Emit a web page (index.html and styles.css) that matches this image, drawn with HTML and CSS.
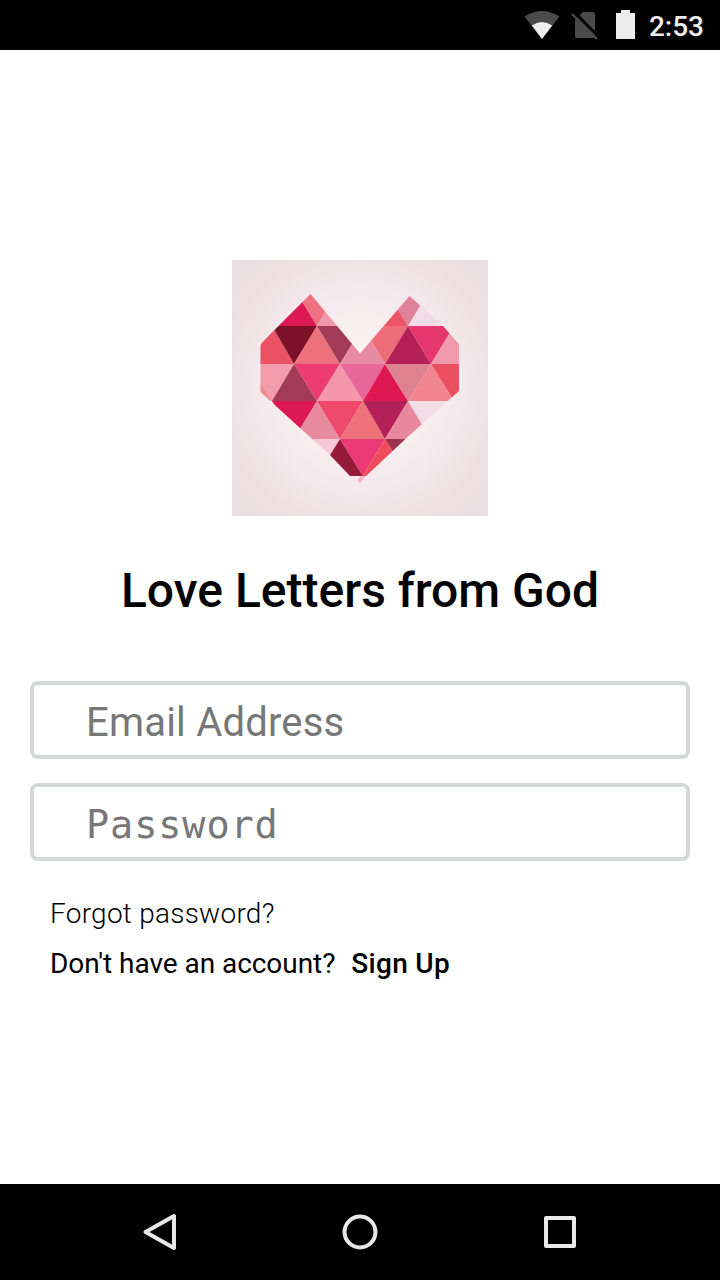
FILE: index.html
```html
<!DOCTYPE html>
<html lang="en">

<head>
  <meta charset="UTF-8">
  <meta name="viewport" content="width=device-width, initial-scale=1.0">
  <title>Love Letters from God</title>
  <link rel="stylesheet" href="styles.css">
</head>

<body>
  <header class="status">
    <svg class="status__wifi" width="36" height="30" viewBox="0 0 36 30">
      <path d="M.500 6.500Q18-4.500 35.500 6.500L18 29Z" fill="#4a4a4a" />
      <path d="M7.800 15.500Q18 8.500 28.200 15.500L18 29Z" fill="#eee" />
    </svg>
    <svg class="status__sim" width="28" height="30" viewBox="0 0 28 30">
      <path d="M12 2h10q2 0 2 2v22q0 2-2 2H6q-2 0-2-2V10Z" fill="#4a4a4a" />
      <path d="M2.500 1.500L28 27" stroke="#000" stroke-width="3" />
      <path d="M1 4L26 29" stroke="#4a4a4a" stroke-width="2.400" />
    </svg>
    <svg class="status__battery" width="19" height="30" viewBox="0 0 19 30">
      <path d="M5 0h9v3h5v26H0V3h5Z" fill="#eee" />
    </svg>
    <span class="status__time">2:53</span>
  </header>

  <main class="login">
    <svg class="login__logo" width="256" height="256" viewBox="0 0 256 256">
      <defs>
        <radialGradient id="glow" cx=".5" cy=".5" r=".7">
          <stop offset="0" stop-color="#fffafb" />
          <stop offset=".3" stop-color="#faf0f2" />
          <stop offset=".55" stop-color="#f4e9ec" />
          <stop offset=".8" stop-color="#ece0e3" />
          <stop offset="1" stop-color="#eadfe2" />
        </radialGradient>
        <clipPath id="heart">
          <path d="M78.500 34L128 93.500L177.500 36L211 66L227 84V131L190 164L174 178.500L133 217L128 223L125 220L129 216H118L98 195L68 168L28.500 132V84Z" />
        </clipPath>
      </defs>
      <rect width="256" height="256" fill="url(#glow)" />
      <g class="login__heart" clip-path="url(#heart)">
        <!-- row 1 -->
        <path d="M62 28L85 66H40Z" fill="#dc1853" />
        <path d="M62 28H108L85 66Z" fill="#ee7181" />
        <path d="M108 28L131 66H85Z" fill="#ef96a8" />
        <path d="M153 28L176 66H131Z" fill="#ed5465" />
        <path d="M153 28H199L176 66Z" fill="#e0819a" />
        <path d="M199 28L222 66H176Z" fill="#f5dbe5" />
        <!-- row 2 -->
        <path d="M40 66L62 104H17Z" fill="#ea5163" />
        <path d="M40 66H85L62 104Z" fill="#7d1128" />
        <path d="M85 66L108 104H62Z" fill="#ee707a" />
        <path d="M85 66H131L108 104Z" fill="#a23b58" />
        <path d="M131 66L153 104H108Z" fill="#e68ba2" />
        <path d="M131 66H176L153 104Z" fill="#ef6d78" />
        <path d="M176 66L199 104H153Z" fill="#b52059" />
        <path d="M176 66H222L199 104Z" fill="#e63670" />
        <path d="M222 66L244 104H199Z" fill="#f09bab" />
        <!-- row 3 -->
        <path d="M17 104L40 141H-5Z" fill="#ee8a92" />
        <path d="M17 104H62L40 141Z" fill="#f29cab" />
        <path d="M62 104L85 141H40Z" fill="#a13b57" />
        <path d="M62 104H108L85 141Z" fill="#ec3b75" />
        <path d="M108 104L131 141H85Z" fill="#f397a9" />
        <path d="M108 104H153L131 141Z" fill="#e8679a" />
        <path d="M153 104L176 141H131Z" fill="#df1753" />
        <path d="M153 104H199L176 141Z" fill="#df8290" />
        <path d="M199 104L222 141H176Z" fill="#f28590" />
        <path d="M199 104H244L222 141Z" fill="#ea4f60" />
        <!-- row 4 -->
        <path d="M40 141H85L62 179Z" fill="#dc1855" />
        <path d="M85 141L108 179H62Z" fill="#e88b9f" />
        <path d="M85 141H131L108 179Z" fill="#ee486a" />
        <path d="M131 141L153 179H108Z" fill="#ee727a" />
        <path d="M131 141H176L153 179Z" fill="#b42058" />
        <path d="M176 141L199 179H153Z" fill="#e8879e" />
        <path d="M176 141H222L199 179Z" fill="#f5dde7" />
        <!-- row 5 -->
        <path d="M62 179H108L85 216Z" fill="#f6c8d8" />
        <path d="M108 179L131 216H85Z" fill="#961b39" />
        <path d="M108 179H153L131 216Z" fill="#ea3975" />
        <path d="M153 179L176 216H131Z" fill="#f04d5c" />
        <path d="M153 179H199L176 216Z" fill="#9e3450" />
        <path d="M108 216H153L131 254Z" fill="#f3b4c3" />
      </g>
    </svg>

    <h1 class="login__title">Love Letters from God</h1>

    <form class="login__form">
      <input class="login__input" type="email" placeholder="Email Address">
      <input class="login__input login__input--password" type="password" placeholder="Password">
    </form>

    <div class="login__links">
      <p class="login__forgot">Forgot password?</p>
      <p class="login__account">Don't have an account?<b class="login__signup">Sign Up</b></p>
    </div>
  </main>

  <nav class="navbar">
    <svg width="40" height="40" viewBox="0 0 40 40">
      <path d="M5.500 20L34 4V36Z" />
    </svg>
    <svg width="40" height="40" viewBox="0 0 40 40">
      <circle cx="20" cy="20" r="15.500" />
    </svg>
    <svg width="40" height="40" viewBox="0 0 40 40">
      <rect x="6" y="6" width="28" height="28" />
    </svg>
  </nav>
</body>

</html>
```
FILE: styles.css
```css
* {
  box-sizing: border-box;
}

body {
  display: flex;
  flex-direction: column;
  height: 1280px;
  margin: 0;
  background: #fff;
  color: #000;
  font-family: Roboto, sans-serif;
}

p {
  margin: 0;
}

.status {
  display: flex;
  align-items: center;
  justify-content: flex-end;
  height: 50px;
  padding-right: 16px;
  background: #000;
}

.status__sim {
  margin-left: 11px;
}

.status__battery {
  margin-left: 17px;
}

.status__time {
  margin: 2px 0 0 14px;
  color: #eee;
  font-size: 28px;
  font-weight: 500;
}

.login {
  display: flex;
  flex: 1;
  flex-direction: column;
  align-items: center;
  padding: 210px 30px 0;
}

.login__logo {
  flex: none;
}

.login__heart {
  filter: blur(.5px);
}

.login__title {
  margin: 47px 0 0;
  font-size: 48px;
  font-weight: 500;
  line-height: 56px;
  white-space: nowrap;
}

.login__form {
  display: flex;
  flex-direction: column;
  gap: 24px;
  width: 100%;
  margin-top: 62px;
}

.login__input {
  width: 100%;
  height: 78px;
  padding: 4px 52px 0;
  border: 4px solid #d6d7d7;
  border-radius: 8px;
  background: #fff;
  font-family: Roboto, sans-serif;
  font-size: 40px;
  letter-spacing: .2px;
}

.login__input::placeholder {
  color: #777;
}

.login__input--password {
  font-family: "DejaVu Sans Mono", monospace;
  font-size: 38.5px;
  letter-spacing: .9px;
}

.login__links {
  width: 100%;
  margin-top: 28px;
  padding-left: 20px;
  font-size: 28px;
  line-height: 50px;
}

.login__forgot {
  font-weight: 300;
  letter-spacing: .25px;
}

.login__account {
  letter-spacing: -.05px;
}

.login__signup {
  margin-left: 16px;
  font-weight: 500;
  letter-spacing: .3px;
}

.navbar {
  display: flex;
  align-items: center;
  justify-content: center;
  gap: 160px;
  height: 96px;
  background: #000;
}

.navbar svg {
  fill: none;
  stroke: #e8e8e8;
  stroke-width: 4;
  stroke-linejoin: round;
}
```
